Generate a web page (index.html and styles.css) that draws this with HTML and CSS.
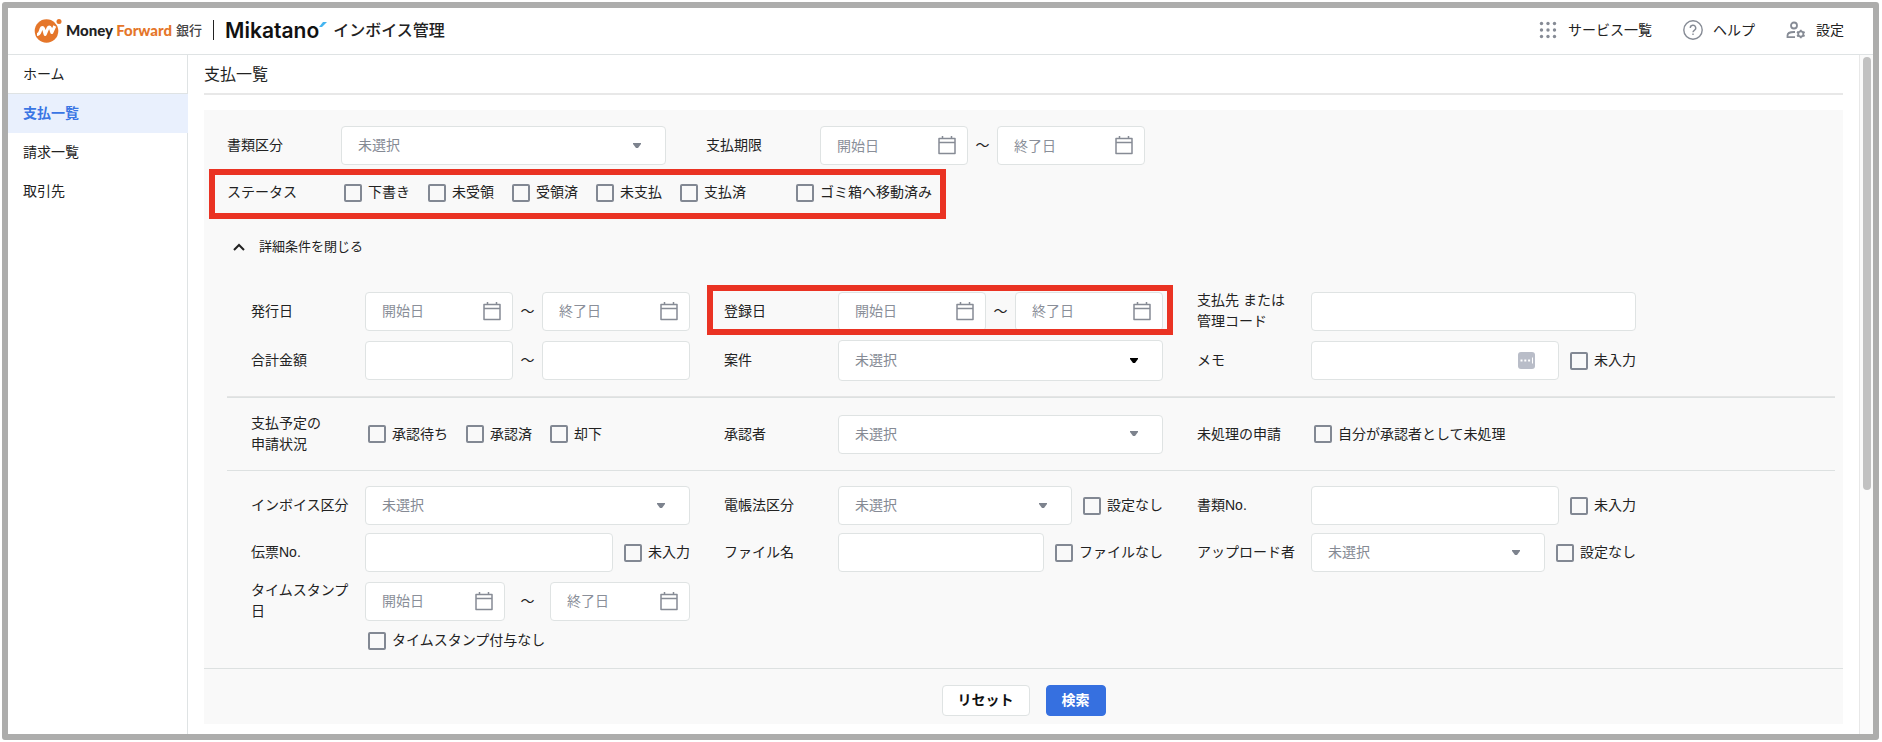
FILE: index.html
```html
<!DOCTYPE html>
<html lang="ja">
<head>
  <meta charset="UTF-8">
  <meta name="viewport" content="width=device-width, initial-scale=1.0">
  <title>支払一覧 | Mikatano インボイス管理</title>
  <link rel="stylesheet" href="styles.css">
</head>
<body>
  <!-- アイコン定義 -->
  <svg class="sprite" aria-hidden="true">
    <symbol id="icon-calendar" viewBox="0 0 20 20">
      <path d="M2 3.5h16v15H2zM2 7.5h16M5.5 1v2.5M14.5 1v2.5" fill="none" stroke="#868b95" stroke-width="1.5" stroke-linejoin="round"/>
    </symbol>
  </svg>

  <div class="app">
    <header class="header">
      <div class="brand">
        <svg class="brand-mark" viewBox="0 0 28 28" aria-hidden="true">
          <circle cx="12.5" cy="15" r="11.8" fill="#e5762a"/>
          <circle cx="25" cy="5.5" r="3.8" fill="#fff"/>
          <circle cx="25" cy="5.5" r="2.5" fill="#e5762a"/>
          <path d="M3 18.500c2 0 2.500-1 3.200-3l1-3c.5-1.500 1.800-1.500 2.300 0l1.700 6 2.800-6.500c.6-1.400 1.900-1.400 2.400 0l1.400 4.500 3-6.500" fill="none" stroke="#fff" stroke-width="3" stroke-linejoin="round"/>
        </svg>
        <span class="brand-money">Money <span class="brand-forward">Forward</span></span>
        <span class="brand-bank">銀行</span>
        <span class="brand-line"></span>
        <span class="brand-mikatano">Mikatano</span>
        <svg class="brand-accent" viewBox="0 0 8 5" aria-hidden="true"><path d="M0 5 4 0h4L3 5z" fill="#43b4f0"/></svg>
        <span class="brand-product">インボイス管理</span>
      </div>
      <nav class="header-menu">
        <a href="#services">
          <svg width="20" height="20" viewBox="0 0 20 20" fill="#868b95" aria-hidden="true">
            <circle cx="3.5" cy="3.5" r="1.7"/><circle cx="10" cy="3.5" r="1.7"/><circle cx="16.5" cy="3.5" r="1.7"/>
            <circle cx="3.5" cy="10" r="1.7"/><circle cx="10" cy="10" r="1.7"/><circle cx="16.5" cy="10" r="1.7"/>
            <circle cx="3.5" cy="16.5" r="1.7"/><circle cx="10" cy="16.5" r="1.7"/><circle cx="16.5" cy="16.5" r="1.7"/>
          </svg>
          サービス一覧
        </a>
        <a href="#help">
          <svg width="20" height="20" viewBox="0 0 20 20" fill="none" stroke="#868b95" stroke-width="1.4" aria-hidden="true">
            <circle cx="10" cy="10" r="9.2"/>
            <path d="M7.3 8a2.7 2.7 0 1 1 4 2.300c-.9.6-1.300 1-1.300 2"/>
            <path d="M10 13.5v1.5"/>
          </svg>
          ヘルプ
        </a>
        <a href="#settings">
          <svg width="20" height="20" viewBox="0 0 20 20" fill="none" stroke="#868b95" stroke-width="1.8" aria-hidden="true">
            <circle cx="8" cy="5.5" r="3"/>
            <path d="M9 17.200H1.500V15.500c0-2 2.500-3.500 6.500-3.500h1"/>
            <path d="M14.800 9.700v2M14.800 16.300v2M11 11.900l1.700 1M16.900 15.200l1.700 1M11 16.200l1.700-1M16.900 12.900l1.700-1"/>
            <circle cx="14.8" cy="14" r="2.6"/>
          </svg>
          設定
        </a>
      </nav>
    </header>

    <div class="body">
      <nav class="sidebar">
        <a href="#home">ホーム</a>
        <a href="#payments" class="active">支払一覧</a>
        <a href="#invoices">請求一覧</a>
        <a href="#clients">取引先</a>
      </nav>

      <main class="main">
        <h1>支払一覧</h1>

        <form class="panel">
          <div class="basic">
            <div class="basic-row">
              <div class="item">
                <label class="name" for="docType">書類区分</label>
                <div class="field">
                  <select id="docType"><option>未選択</option></select>
                </div>
              </div>
              <div class="item">
                <label class="name" for="dueFrom">支払期限</label>
                <div class="field range">
                  <span class="date"><input type="text" id="dueFrom" placeholder="開始日"><svg><use href="#icon-calendar"/></svg></span>
                  <span class="tilde">～</span>
                  <span class="date"><input type="text" aria-label="支払期限 終了日" placeholder="終了日"><svg><use href="#icon-calendar"/></svg></span>
                </div>
              </div>
            </div>

            <div class="status highlight" role="group" aria-labelledby="statusName">
              <span class="name" id="statusName">ステータス</span>
              <div class="checks">
                <label class="check"><input type="checkbox">下書き</label>
                <label class="check"><input type="checkbox">未受領</label>
                <label class="check"><input type="checkbox">受領済</label>
                <label class="check"><input type="checkbox">未支払</label>
                <label class="check"><input type="checkbox">支払済</label>
                <label class="check check-trash"><input type="checkbox">ゴミ箱へ移動済み</label>
              </div>
            </div>

            <button type="button" class="toggle">
              <svg width="12" height="8" viewBox="0 0 12 8" fill="none" stroke="#222" stroke-width="2" aria-hidden="true"><path d="M1 7l5-5 5 5"/></svg>
              詳細条件を閉じる
            </button>
          </div>

          <div class="details">
            <section class="group group-wide">
              <div class="item">
                <label class="name" for="issueFrom">発行日</label>
                <div class="field range">
                  <span class="date"><input type="text" id="issueFrom" placeholder="開始日"><svg><use href="#icon-calendar"/></svg></span>
                  <span class="tilde">～</span>
                  <span class="date"><input type="text" aria-label="発行日 終了日" placeholder="終了日"><svg><use href="#icon-calendar"/></svg></span>
                </div>
              </div>
              <div class="item highlight">
                <label class="name" for="entryFrom">登録日</label>
                <div class="field range">
                  <span class="date"><input type="text" id="entryFrom" placeholder="開始日"><svg><use href="#icon-calendar"/></svg></span>
                  <span class="tilde">～</span>
                  <span class="date"><input type="text" aria-label="登録日 終了日" placeholder="終了日"><svg><use href="#icon-calendar"/></svg></span>
                </div>
              </div>
              <div class="item">
                <label class="name" for="payee">支払先 または<br>管理コード</label>
                <div class="field"><input type="text" id="payee"></div>
              </div>

              <div class="item">
                <label class="name" for="amountFrom">合計金額</label>
                <div class="field range">
                  <input type="text" id="amountFrom">
                  <span class="tilde">～</span>
                  <input type="text" aria-label="合計金額 上限">
                </div>
              </div>
              <div class="item">
                <label class="name" for="project">案件</label>
                <div class="field">
                  <select id="project" class="select-dark"><option>未選択</option></select>
                </div>
              </div>
              <div class="item">
                <label class="name" for="memo">メモ</label>
                <div class="field">
                  <span class="memo">
                    <input type="text" id="memo">
                    <svg width="17" height="17" viewBox="0 0 17 17" aria-hidden="true">
                      <rect width="17" height="17" rx="3" fill="#b9bdc8"/>
                      <path d="M2.500 8.500h2M6.300 8.500h2M10.100 8.500h2" stroke="#fff" stroke-width="2"/>
                      <path d="M14.500 5.500v6" stroke="#fff"/>
                    </svg>
                  </span>
                  <label class="check"><input type="checkbox">未入力</label>
                </div>
              </div>
            </section>

            <section class="group">
              <div class="item" role="group" aria-labelledby="applyName">
                <span class="name" id="applyName">支払予定の<br>申請状況</span>
                <div class="checks">
                  <label class="check"><input type="checkbox">承認待ち</label>
                  <label class="check"><input type="checkbox">承認済</label>
                  <label class="check"><input type="checkbox">却下</label>
                </div>
              </div>
              <div class="item">
                <label class="name" for="approver">承認者</label>
                <div class="field">
                  <select id="approver"><option>未選択</option></select>
                </div>
              </div>
              <div class="item" role="group" aria-labelledby="pendingName">
                <span class="name" id="pendingName">未処理の申請</span>
                <div class="checks">
                  <label class="check"><input type="checkbox">自分が承認者として未処理</label>
                </div>
              </div>
            </section>

            <section class="group">
              <div class="item">
                <label class="name" for="invoiceType">インボイス区分</label>
                <div class="field">
                  <select id="invoiceType"><option>未選択</option></select>
                </div>
              </div>
              <div class="item">
                <label class="name" for="lawType">電帳法区分</label>
                <div class="field">
                  <select id="lawType"><option>未選択</option></select>
                  <label class="check"><input type="checkbox">設定なし</label>
                </div>
              </div>
              <div class="item">
                <label class="name" for="docNo">書類No.</label>
                <div class="field">
                  <input type="text" id="docNo">
                  <label class="check"><input type="checkbox">未入力</label>
                </div>
              </div>

              <div class="item">
                <label class="name" for="slipNo">伝票No.</label>
                <div class="field">
                  <input type="text" id="slipNo">
                  <label class="check"><input type="checkbox">未入力</label>
                </div>
              </div>
              <div class="item">
                <label class="name" for="fileName">ファイル名</label>
                <div class="field">
                  <input type="text" id="fileName">
                  <label class="check"><input type="checkbox">ファイルなし</label>
                </div>
              </div>
              <div class="item">
                <label class="name" for="uploader">アップロード者</label>
                <div class="field">
                  <select id="uploader"><option>未選択</option></select>
                  <label class="check"><input type="checkbox">設定なし</label>
                </div>
              </div>

              <div class="timestamp">
                <div class="item">
                  <label class="name" for="stampFrom">タイムスタンプ<br>日</label>
                  <div class="field range range-loose">
                    <span class="date"><input type="text" id="stampFrom" placeholder="開始日"><svg><use href="#icon-calendar"/></svg></span>
                    <span class="tilde">～</span>
                    <span class="date"><input type="text" aria-label="タイムスタンプ日 終了日" placeholder="終了日"><svg><use href="#icon-calendar"/></svg></span>
                  </div>
                </div>
                <div class="checks">
                  <label class="check"><input type="checkbox">タイムスタンプ付与なし</label>
                </div>
              </div>
            </section>
          </div>

          <div class="actions">
            <button type="reset" class="btn">リセット</button>
            <button type="submit" class="btn btn-primary">検索</button>
          </div>
        </form>
      </main>

      <div class="scrollbar"><div class="thumb"></div></div>
    </div>
  </div>
</body>
</html>
```
FILE: styles.css
```css
* {
  margin: 0;
  padding: 0;
  box-sizing: border-box;
}

body {
  display: flex;
  min-height: 100vh;
  padding: 2px 3px 2px 2px;
  background-color: #fff;
  color: #222;
  font-family: "Liberation Sans", "Noto Sans CJK JP", sans-serif;
  font-size: 14px;
  line-height: 21px;
}

a {
  color: inherit;
  text-decoration: none;
}

.sprite {
  position: absolute;
  width: 0;
  height: 0;
}

.app {
  flex: 1;
  display: flex;
  flex-direction: column;
  border: 6px solid #adadac;
  border-radius: 3px;
}

/* ヘッダー */
.header {
  display: flex;
  justify-content: space-between;
  align-items: center;
  height: 47px;
  padding: 0 29px 2px 26px;
  border-bottom: 1px solid #dfe3e4;
}

.brand {
  display: flex;
  align-items: center;
  white-space: nowrap;
}

.brand-mark {
  width: 28px;
  height: 28px;
  margin-right: 4px;
}

.brand-money {
  font-family: Lato, sans-serif;
  font-size: 15px;
  font-weight: 900;
}

.brand-forward {
  color: #e5762a;
}

.brand-bank {
  margin-left: 4px;
  font-size: 13px;
  font-weight: 500;
  color: #444;
}

.brand-line {
  width: 1px;
  height: 20px;
  margin: 0 11px;
  background-color: #222;
}

.brand-mikatano {
  font-family: Inter, sans-serif;
  font-size: 21px;
  font-weight: 600;
  color: #111;
}

.brand-accent {
  align-self: flex-start;
  width: 8px;
  height: 5px;
  margin-top: 6px;
}

.brand-product {
  margin-left: 6px;
  font-size: 16px;
  font-weight: 500;
}

.header-menu {
  display: flex;
  gap: 31px;
}

.header-menu a {
  display: flex;
  align-items: center;
  gap: 10px;
}

.body {
  flex: 1;
  display: flex;
}

/* サイドバー */
.sidebar {
  width: 180px;
  border-right: 1px solid #dfe3e4;
}

.sidebar a {
  display: block;
  padding: 9px 15px;
}

.sidebar a:first-child {
  padding-bottom: 8px;
  border-bottom: 1px solid #dfe3e4;
}

.sidebar .active {
  margin-right: -1px;
  background-color: #e9f0fd;
  color: #3a76e4;
  font-weight: bold;
}

/* メイン */
.main {
  flex: 1;
  padding: 0 16px 9px;
}

h1 {
  padding: 9px 0 7px;
  border-bottom: 2px solid #e8e8e8;
  font-size: 16px;
  font-weight: normal;
  line-height: 22px;
}

.panel {
  margin-top: 15px;
  background-color: #f9f9f9;
}

.basic {
  padding: 16px 8px 0 23px;
}

.basic-row {
  display: grid;
  grid-template-columns: repeat(2, minmax(0, 439px));
  gap: 40px;
}

.item {
  display: flex;
  align-items: center;
}

.name {
  flex: none;
  width: 114px;
}

.field {
  flex: 1;
  display: flex;
  align-items: center;
  gap: 11px;
  min-width: 0;
}

input[type="text"],
select {
  flex: 1;
  width: 100%;
  min-width: 0;
  height: 39px;
  padding: 0 16px;
  border: 1px solid #dfe3e3;
  border-radius: 4px;
  background-color: #fff;
  color: #222;
  font: inherit;
}

input::placeholder {
  color: #8a8f99;
  opacity: 1;
}

select {
  appearance: none;
  background-image: url("data:image/svg+xml,%3Csvg xmlns='http://www.w3.org/2000/svg' width='10' height='6'%3E%3Cpath d='M1 0h8v1L6 5H4L1 1z' fill='%237d838e'/%3E%3C/svg%3E");
  background-repeat: no-repeat;
  background-position: right 23px center;
  color: #858a94;
}

.select-dark {
  height: 41px;
  background-image: url("data:image/svg+xml,%3Csvg xmlns='http://www.w3.org/2000/svg' width='10' height='6'%3E%3Cpath d='M1 0h8v1L6 5H4L1 1z' fill='%23000'/%3E%3C/svg%3E");
}

.range {
  gap: 0;
}

.tilde {
  flex: none;
  width: 29px;
  text-align: center;
}

.range-loose .tilde {
  width: 45px;
}

.date,
.memo {
  flex: 1;
  display: flex;
  position: relative;
  min-width: 0;
}

.date svg {
  position: absolute;
  top: 9px;
  right: 11px;
  width: 20px;
  height: 20px;
}

.memo svg {
  position: absolute;
  top: 11px;
  right: 24px;
}

.checks {
  display: flex;
  gap: 18px;
  padding-left: 3px;
}

.check {
  display: flex;
  align-items: center;
  gap: 6px;
  white-space: nowrap;
}

.check input {
  appearance: none;
  width: 18px;
  height: 18px;
  border: 2px solid #828893;
  border-radius: 2px;
}

.check input:checked {
  background-color: #3670e0;
}

.check-trash {
  margin-left: 32px;
}

.status {
  display: flex;
  align-items: center;
  width: fit-content;
  height: 39px;
  margin-top: 8px;
}

/* 赤枠 */
.highlight {
  position: relative;
}

.highlight::after {
  content: "";
  position: absolute;
  inset: -5px -10px -3px -17px;
  border: 6px solid #ea3323;
  pointer-events: none;
}

.status.highlight::after {
  inset: -4px -14px -7px -18px;
}

.toggle {
  display: flex;
  align-items: center;
  gap: 14px;
  margin: 24px 0 0 6px;
  border: none;
  background: none;
  color: #222;
  font: inherit;
  font-size: 13px;
}

.details {
  padding: 18px 8px 0 23px;
}

.group {
  display: grid;
  grid-template-columns: repeat(3, minmax(0, 439px));
  gap: 8px 34px;
  padding: 15px 0 15px 24px;
}

.group + .group {
  border-top: 1px solid #dde1e1;
}

.group-wide {
  border-bottom: 1px solid #e5e5e5;
}

.group:last-child {
  padding-bottom: 17px;
}

.timestamp .checks {
  margin-top: 8px;
  padding-left: 117px;
}

/* ボタン */
.actions {
  display: flex;
  justify-content: center;
  gap: 16px;
  padding: 16px 0 8px;
  border-top: 1px solid #dde1e1;
}

.btn {
  height: 31px;
  padding: 0 15px;
  border: 1px solid #dfe3e3;
  border-radius: 4px;
  background-color: #fff;
  color: #111;
  font: inherit;
  font-weight: bold;
  cursor: pointer;
}

.btn-primary {
  border-color: #3670e0;
  background-color: #3670e0;
  color: #fff;
}

.scrollbar {
  width: 14px;
  padding: 2px 2px 0 3px;
  border-left: 1px solid #e8e8e8;
  background-color: #fafafa;
}

.thumb {
  width: 8px;
  height: 64%;
  border-radius: 4px;
  background-color: #c1c1c1;
}
```
